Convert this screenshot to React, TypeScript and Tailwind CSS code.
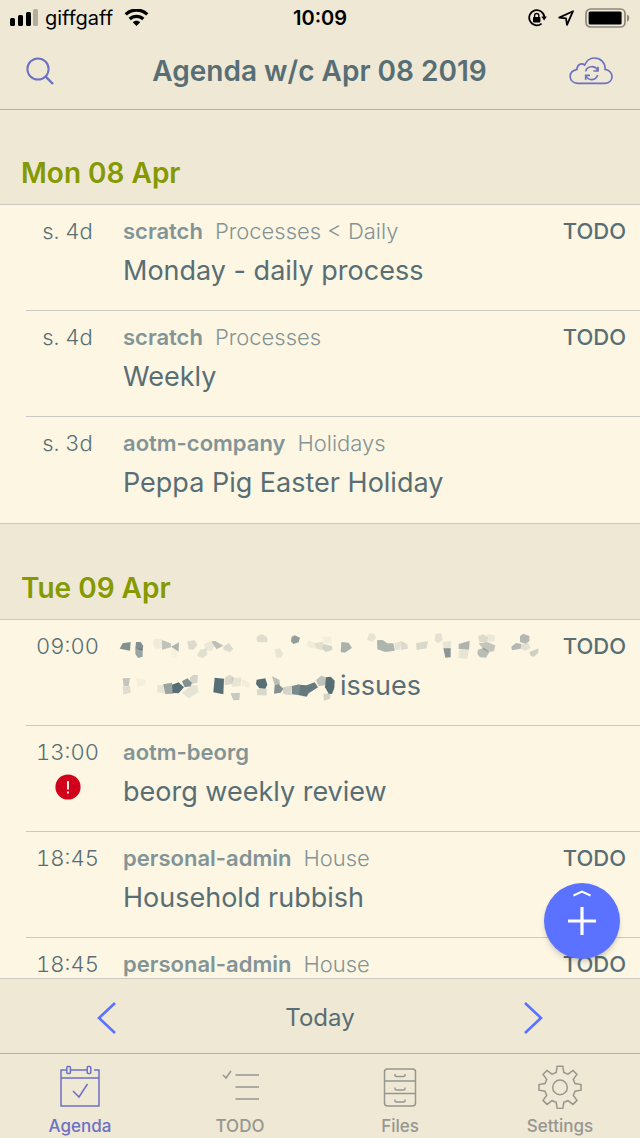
import type { ReactNode } from "react";

type Item = {
  time: string;
  file?: string;
  path?: string;
  title?: string;
  todo?: boolean;
  urgent?: boolean;
  redacted?: boolean;
};

const days: { label: string; items: Item[] }[] = [
  {
    label: "Mon 08 Apr",
    items: [
      { time: "s. 4d", file: "scratch", path: "Processes < Daily", title: "Monday - daily process", todo: true },
      { time: "s. 4d", file: "scratch", path: "Processes", title: "Weekly", todo: true },
      { time: "s. 3d", file: "aotm-company", path: "Holidays", title: "Peppa Pig Easter Holiday" },
    ],
  },
  {
    label: "Tue 09 Apr",
    items: [
      { time: "09:00", title: "issues", todo: true, redacted: true },
      { time: "13:00", file: "aotm-beorg", title: "beorg weekly review", urgent: true },
      { time: "18:45", file: "personal-admin", path: "House", title: "Household rubbish", todo: true },
      { time: "18:45", file: "personal-admin", path: "House", todo: true },
    ],
  },
];

// [points, opacity]
type Shard = [string, number];

const metaShards: Shard[] = [
  ["38,58 62,54 60,80 29,74", 0.75],
  ["78,54 92,54 100,66 97,80 76,73", 0.75],
  ["76,73 98,74 98,98 84,102 76,90", 0.6],
  ["132,45 156,46 155,73 136,74 129,62", 0.08],
  ["156,48 182,58 183,70 156,77", 0.38],
  ["183,68 207,55 206,83", 0.48],
  ["184,76 204,86 200,102 184,98", 0.03],
  ["232,52 254,49 262,62 250,77 236,76", 0.2],
  ["260,94 272,76 288,74 292,92 276,103", 0.16],
  ["282,60 300,52 314,66 306,80 286,80", 0.1],
  ["303,52 316,51 340,65 320,76", 0.4],
  ["340,68 356,57 370,74 360,84 340,77", 0.2],
  ["442,36 456,30 472,40 472,55 444,55 439,46", 0.18],
  ["494,76 510,73 520,90 512,102 498,100", 0.12],
  ["545,38 554,34 570,41 566,55 550,60 543,52", 0.65],
  ["594,50 616,57 614,74 592,68", 0.08],
  ["614,58 640,53 640,78 618,74", 0.16],
  ["640,60 666,66 667,78 646,84 638,74", 0.25],
  ["636,38 664,38 664,58 642,56", 0.06],
  ["694,54 716,56 726,72 704,86 692,84", 0.5],
  ["778,28 794,29 798,42 786,54 771,47", 0.13],
  ["801,49 818,48 832,58 850,58 854,80 826,84 802,76", 0.48],
  ["853,58 872,52 872,76 854,78", 0.14],
  ["872,50 892,60 894,74 874,78", 0.2],
  ["918,57 954,52 950,73 920,78", 0.22],
  ["976,30 994,28 998,48 984,57 974,50", 0.15],
  ["998,53 1024,52 1022,74 1000,73", 0.12],
  ["1000,73 1022,73 1022,100 1006,101", 0.7],
  ["1046,60 1079,50 1077,77 1046,75", 0.48],
  ["1048,78 1077,78 1072,104 1045,102", 0.12],
  ["1104,36 1120,31 1134,40 1132,56 1108,54", 0.2],
  ["1130,30 1154,34 1154,52 1136,54", 0.1],
  ["1106,58 1134,55 1156,64 1152,82 1132,84 1120,76", 0.35],
  ["1104,77 1122,71 1138,84 1128,101 1110,100 1102,90", 0.42],
  ["1204,68 1218,57 1234,60 1232,74 1206,79", 0.45],
  ["1230,36 1240,29 1258,36 1258,52 1246,59 1230,54", 0.45],
  ["1232,62 1254,56 1262,72 1246,80 1234,76", 0.15],
  ["1258,84 1286,73 1284,88 1272,98 1262,96", 0.28],
];

const titleShards: Shard[] = [
  ["38,161 60,160 56,184 41,184", 0.35],
  ["38,185 60,184 62,204 40,210", 0.18],
  ["79,160 108,165 106,181 82,186", 0.05],
  ["142,182 164,180 164,206 142,203", 0.12],
  ["160,179 186,174 190,207 166,208", 0.6],
  ["186,180 206,173 222,188 206,206 188,205", 1],
  ["216,170 232,161 246,174 242,185 224,188", 0.75],
  ["238,160 250,150 264,152 262,174 246,178", 0.25],
  ["216,204 244,182 262,182 266,202 236,221", 0.14],
  ["314,159 342,162 340,209 310,203", 1],
  ["344,160 358,150 372,158 366,178 344,182", 0.22],
  ["364,160 394,158 392,184 366,186", 0.12],
  ["394,162 420,174 416,190 396,182", 0.06],
  ["362,206 390,204 388,226 370,227", 0.32],
  ["440,165 466,161 472,180 466,192 448,191 438,178", 1],
  ["440,194 470,192 470,212 442,212", 0.22],
  ["486,155 508,165 510,180 494,181", 0.4],
  ["494,182 506,179 520,192 512,204 492,207", 0.75],
  ["518,188 546,183 544,212 520,208", 0.25],
  ["546,184 568,179 570,212 546,209", 0.8],
  ["568,180 590,182 614,173 624,188 596,206 590,216 568,212", 0.92],
  ["618,166 634,153 648,158 648,182 626,184", 0.38],
  ["648,158 662,156 674,168 673,190 666,208 656,207 645,188", 1],
  ["640,208 662,204 660,222 642,228", 0.25],
];

function Shards({ shards }: { shards: Shard[] }) {
  return (
    <>
      {shards.map(([points, opacity]) => (
        <polygon key={points} points={points} fill="#586e75" opacity={opacity} />
      ))}
    </>
  );
}

function StatusBar() {
  return (
    <div className="grid h-9 grid-cols-3 items-center pr-[10px] pl-[10px] text-xl text-black">
      <div className="flex items-center gap-[7px]">
        <svg width="28" height="18" viewBox="0 0 28 18">
          <rect x="0" y="9" width="5" height="8" rx="1.5" />
          <rect x="8" y="6" width="5" height="11" rx="1.5" />
          <rect x="16" y="3" width="5" height="14" rx="1.5" />
          <rect x="23" y="0" width="5" height="17" rx="1.5" fill="#b3ad9d" />
        </svg>
        <span>giffgaff</span>
        <svg className="ml-1" width="25" height="18" viewBox="0 0 24 18" fill="none" stroke="#000" strokeWidth="3.2">
          <path d="M1.2 5.4C7.2 -.4 16.8 -.4 22.8 5.4" />
          <path d="M5.2 10c3.8-3.6 9.8-3.6 13.6 0" />
          <path d="M8.3 13.2c2.1-2 5.3-2 7.4 0L12 17z" fill="#000" stroke="none" />
        </svg>
      </div>
      <div className="text-center font-semibold">10:09</div>
      <div className="flex items-center justify-end gap-[11px]">
        <svg width="19" height="18" viewBox="0 0 19 18" fill="none" stroke="#000" strokeWidth="1.8">
          <path d="M13.6 14.6A7.6 7.6 0 1 1 16.4 8" />
          <path d="M13.4 7.6h5.4l-2.7 4z" fill="#000" stroke="none" />
          <rect x="5" y="8" width="7.4" height="5.4" rx=".8" fill="#000" stroke="none" />
          <path d="M6.6 8.4V6.6a2.1 2.1 0 0 1 4.2 0v1.8" strokeWidth="1.4" />
        </svg>
        <svg width="16" height="16" viewBox="0 0 16 16" fill="none" stroke="#000" strokeWidth="1.8" strokeLinejoin="round">
          <path d="M1.2 7.6 15 1.2 9 14.8 8 8.4z" />
        </svg>
        <svg width="45" height="20" viewBox="0 0 45 20">
          <rect x="1" y="1" width="39" height="18" rx="4.5" fill="none" stroke="#8d887c" strokeWidth="1.7" />
          <rect x="3.6" y="3.6" width="33" height="12.8" rx="1.5" />
          <path d="M42 6.4c3 1 3 6.2 0 7.2z" fill="#8d887c" />
        </svg>
      </div>
    </div>
  );
}

function NavBar() {
  return (
    <header className="relative z-10 shrink-0 border-b border-[#b5b0a2] bg-[#eee8d5]">
      <StatusBar />
      <div className="flex h-[73px] items-center justify-between pr-[27px] pb-[3px] pl-[26px] text-[#6c71c4]">
        <button type="button" aria-label="Search" className="w-11">
          <svg width="28" height="28" viewBox="0 0 28 28" fill="none" stroke="currentColor" strokeWidth="2">
            <circle cx="12" cy="12" r="10.6" />
            <path d="M19.4 19.4 27 27" strokeWidth="2.4" />
          </svg>
        </button>
        <h1 className="text-[28px] font-semibold text-[#586e75]">Agenda w/c Apr 08 2019</h1>
        <button type="button" aria-label="Sync" className="w-11">
          <svg width="44" height="30" viewBox="208 169 132 90" fill="none" stroke="currentColor" strokeWidth="5">
            <path d="M234 251H316C344 249 344 214 316 209C318 188 302 175 284 175C268 175 260 184 255 196C244 188 232 196 232 209C203 216 206 249 234 251Z" />
            <path d="M258 215C262 198 286 196 294 212" />
            <path d="M295 201V214H281" />
            <path d="M294 226C288 244 266 244 259 229" />
            <path d="M258 240V227H271" />
          </svg>
        </button>
      </div>
    </header>
  );
}

function AgendaRow({ item }: { item: Item }) {
  return (
    <li className="ml-[26px] flex h-[106px] border-b border-[#c9c8c5] pt-[14px] pr-[14px] last:border-b-0">
      <div className="flex w-[83px] shrink-0 flex-col items-center gap-[10px]">
        <span className="text-[22px] leading-6 font-light text-[#586e75] tabular-nums">{item.time}</span>
        {item.urgent && (
          <svg width="26" height="26" viewBox="0 0 26 26" role="img" aria-label="High priority">
            <circle cx="13" cy="13" r="12.6" fill="#d0021b" />
            <path d="M13 7v8.6M13 17.6v2" stroke="#fff" strokeWidth="1.8" />
          </svg>
        )}
      </div>
      <div className="ml-[14px] flex min-w-0 flex-1 flex-col gap-[10px]">
        <div className="flex items-center justify-between text-[22px] leading-6">
          {item.redacted ? (
            <svg className="overflow-visible" width="420" height="24" viewBox="39 30 1260 72">
              <Shards shards={metaShards} />
            </svg>
          ) : (
            <p className="flex gap-3">
              <span className="font-semibold text-[#839496]">{item.file}</span>
              <span className="font-light text-[#839496]">{item.path}</span>
            </p>
          )}
          {item.todo && <span className="font-medium text-[#586e75]">TODO</span>}
        </div>
        {item.title && (
          <div className="flex items-center gap-[2px] text-[27px] leading-9 text-[#586e75]">
            {item.redacted && (
              <svg className="overflow-visible" width="215" height="36" viewBox="39 130 645 108">
                <Shards shards={titleShards} />
              </svg>
            )}
            <span>{item.title}</span>
          </div>
        )}
      </div>
    </li>
  );
}

function Tab({ label, active, children }: { label: string; active?: boolean; children: ReactNode }) {
  return (
    <a
      href="#"
      aria-current={active ? "page" : undefined}
      className={`flex flex-col items-center gap-[5px] pt-[11px] text-[17px] leading-6 font-medium ${
        active ? "text-[#6c71c4]" : "text-[#979690]"
      }`}
    >
      <svg width="44" height="44" viewBox="0 0 44 44" fill="none" stroke="currentColor" strokeWidth="1.5">
        {children}
      </svg>
      {label}
    </a>
  );
}

function TabBar() {
  return (
    <nav className="grid h-[85px] shrink-0 grid-cols-4 border-t border-[#b5b0a2] bg-[#eee8d5]">
      <Tab label="Agenda" active>
        <path d="M8 5H3v36h38V5h-5M12 5h17M3 13h38" />
        <rect x="8.8" y="1.6" width="3.6" height="7" rx="1" />
        <rect x="29.2" y="1.6" width="3.6" height="7" rx="1" />
        <path d="m15 26 6 6 8.5-13" />
      </Tab>
      <Tab label="TODO">
        <path d="m5 10 3 3 5-7M17.5 10H41M17.5 22H41M17.5 34H41" />
      </Tab>
      <Tab label="Files">
        <rect x="6.5" y="4" width="31" height="37" rx="3" />
        <path d="M6.5 16h31M6.5 28.500h31" />
        <path d="M17 9v1.500q0 1 1.500 1h7q1.500 0 1.500-1V9M17 22.500V24q0 1 1.500 1h7q1.500 0 1.500-1v-1.500M17 34.500V36q0 1 1.500 1h7q1.500 0 1.500-1v-1.500" />
      </Tab>
      <Tab label="Settings">
        <path d="M19.2 1.2h5.600l1 6.200 4.200 1.700 5-3.700 4 4-3.700 5 1.700 4.200 6 1v5.600l-6 1-1.700 4.200 3.700 5-4 4-5-3.700-4.200 1.700-1 6.200h-5.600l-1-6.200-4.200-1.700-5 3.700-4-4 3.700-5-1.700-4.200-6-1v-5.600l6-1 1.700-4.200-3.700-5 4-4 5 3.700 4.200-1.700z" />
        <circle cx="22" cy="22.4" r="7.3" />
      </Tab>
    </nav>
  );
}

export default function App() {
  return (
    <div className="flex h-screen flex-col bg-[#fdf6e3] font-['Inter','Liberation_Sans',sans-serif]">
      <NavBar />

      <div className="relative -mt-px min-h-0 flex-1">
        <main className="h-full overflow-y-auto [scrollbar-width:none]">
          {days.map((day) => (
            <section key={day.label}>
              <h2 className="flex h-[95px] items-end bg-[#eee8d5] px-[21px] pb-[13px] text-[28px] leading-9 font-semibold text-[#859900]">
                {day.label}
              </h2>
              <ul className="border-y border-[#c9c8c5]">
                {day.items.map((item, i) => (
                  <AgendaRow key={i} item={item} />
                ))}
              </ul>
            </section>
          ))}
        </main>

        {/* Add button floats over the list */}
        <button
          type="button"
          aria-label="Add item"
          className="absolute right-5 bottom-[19px] h-19 w-19 rounded-full bg-[#5a72ff] shadow-md shadow-black/15"
        >
          <svg width="76" height="76" viewBox="0 0 76 76" fill="none" stroke="#fff">
            <path d="m29.5 12.5 8.5-4 8.5 4" strokeWidth="2" />
            <path d="M38 24v28M24 38h28" strokeWidth="3.2" />
          </svg>
        </button>
      </div>

      {/* Week switcher */}
      <div className="flex h-[75px] shrink-0 items-center justify-between border-t border-[#c9c8c5] bg-[#eee8d5] px-24 pt-[3px] text-[#5a72ff]">
        <button type="button" aria-label="Previous week">
          <svg width="22" height="34" viewBox="0 0 22 34" fill="none" stroke="currentColor" strokeWidth="2.6">
            <path d="M19 2 3 17l16 15" />
          </svg>
        </button>
        <button type="button" className="text-2xl text-[#586e75]">
          Today
        </button>
        <button type="button" aria-label="Next week">
          <svg width="22" height="34" viewBox="0 0 22 34" fill="none" stroke="currentColor" strokeWidth="2.6">
            <path d="m3 2 16 15L3 32" />
          </svg>
        </button>
      </div>

      <TabBar />
    </div>
  );
}
